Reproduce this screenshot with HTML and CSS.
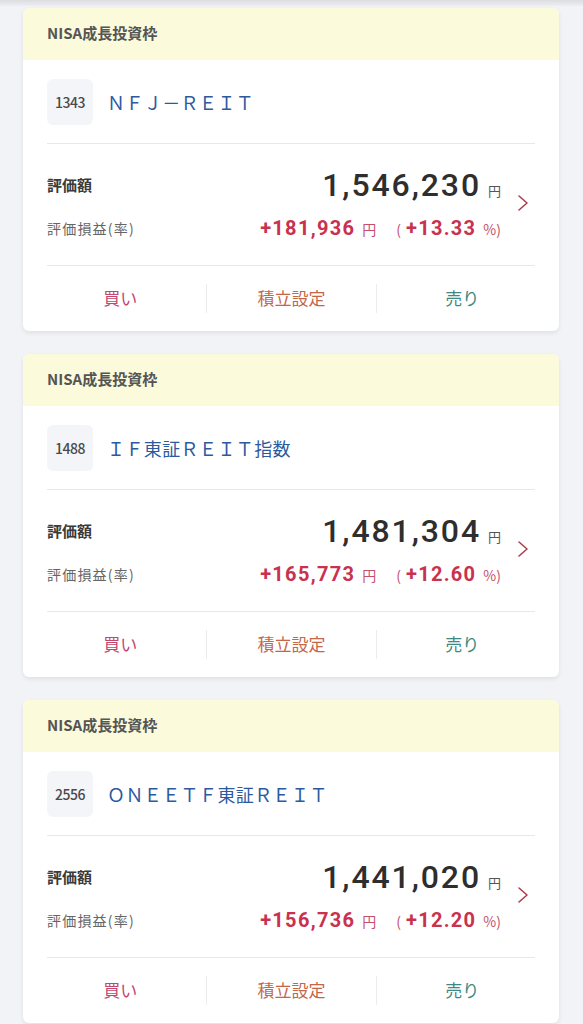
FILE: index.html
```html
<!DOCTYPE html>
<html lang="ja">
<head>
<meta charset="utf-8">
<title>NISA</title>
<link rel="stylesheet" href="styles.css">
</head>
<body>
<div class="topbar"></div>
<main class="list">
  <section class="card">
    <div class="card-head">NISA成長投資枠</div>
    <div class="card-body">
      <div class="name-row">
        <span class="code">1343</span>
        <span class="name">ＮＦＪ－ＲＥＩＴ</span>
      </div>
      <div class="values">
        <div class="value-table">
          <div class="row row-main">
            <span class="label-strong">評価額</span>
            <span class="amount"><span class="big">1,546,230</span><span class="yen">円</span></span>
          </div>
          <div class="row row-gain">
            <span class="label">評価損益(率)</span>
            <span class="gain"><span class="gain-num">+181,936</span><span class="gain-unit">円</span><span class="rate"><span class="paren">(</span><span class="gain-num">+13.33</span><span class="gain-unit">%)</span></span></span>
          </div>
        </div>
        <div class="chev"><svg width="13" height="18" viewBox="0 0 13 18"><path d="M2 2 L10 9 L2 16" fill="none" stroke="#a8404f" stroke-width="1.6" stroke-linecap="round" stroke-linejoin="round"/></svg></div>
      </div>
    </div>
    <div class="actions">
      <span class="act buy">買い</span>
      <span class="act plan">積立設定</span>
      <span class="act sell">売り</span>
    </div>
  </section>

  <section class="card">
    <div class="card-head">NISA成長投資枠</div>
    <div class="card-body">
      <div class="name-row">
        <span class="code">1488</span>
        <span class="name">ＩＦ東証ＲＥＩＴ指数</span>
      </div>
      <div class="values">
        <div class="value-table">
          <div class="row row-main">
            <span class="label-strong">評価額</span>
            <span class="amount"><span class="big">1,481,304</span><span class="yen">円</span></span>
          </div>
          <div class="row row-gain">
            <span class="label">評価損益(率)</span>
            <span class="gain"><span class="gain-num">+165,773</span><span class="gain-unit">円</span><span class="rate"><span class="paren">(</span><span class="gain-num">+12.60</span><span class="gain-unit">%)</span></span></span>
          </div>
        </div>
        <div class="chev"><svg width="13" height="18" viewBox="0 0 13 18"><path d="M2 2 L10 9 L2 16" fill="none" stroke="#a8404f" stroke-width="1.6" stroke-linecap="round" stroke-linejoin="round"/></svg></div>
      </div>
    </div>
    <div class="actions">
      <span class="act buy">買い</span>
      <span class="act plan">積立設定</span>
      <span class="act sell">売り</span>
    </div>
  </section>

  <section class="card">
    <div class="card-head">NISA成長投資枠</div>
    <div class="card-body">
      <div class="name-row">
        <span class="code">2556</span>
        <span class="name">ＯＮＥＥＴＦ東証ＲＥＩＴ</span>
      </div>
      <div class="values">
        <div class="value-table">
          <div class="row row-main">
            <span class="label-strong">評価額</span>
            <span class="amount"><span class="big">1,441,020</span><span class="yen">円</span></span>
          </div>
          <div class="row row-gain">
            <span class="label">評価損益(率)</span>
            <span class="gain"><span class="gain-num">+156,736</span><span class="gain-unit">円</span><span class="rate"><span class="paren">(</span><span class="gain-num">+12.20</span><span class="gain-unit">%)</span></span></span>
          </div>
        </div>
        <div class="chev"><svg width="13" height="18" viewBox="0 0 13 18"><path d="M2 2 L10 9 L2 16" fill="none" stroke="#a8404f" stroke-width="1.6" stroke-linecap="round" stroke-linejoin="round"/></svg></div>
      </div>
    </div>
    <div class="actions">
      <span class="act buy">買い</span>
      <span class="act plan">積立設定</span>
      <span class="act sell">売り</span>
    </div>
  </section>
</main>
</body>
</html>
```

FILE: styles.css
```css
* { box-sizing: border-box; }
html, body {
  margin: 0;
  padding: 0;
  background: #f2f3f7;
  font-family: "Noto Sans CJK JP", "Noto Sans", sans-serif;
  color: #333;
}
.topbar {
  height: 6px;
  background: linear-gradient(#dcdde0, #eceef1);
}
.list {
  padding: 2px 24px 0 23px;
}
.card {
  background: #fff;
  border-radius: 6px;
  box-shadow: 0 2px 4px rgba(0, 0, 0, 0.08);
  margin-bottom: 23px;
  overflow: hidden;
}
.card-head {
  height: 52px;
  background: #fbfadb;
  padding: 0 24px 3px;
  display: flex;
  align-items: center;
  font-size: 15px;
  font-weight: 700;
  color: #555;
}
.card-body {
  padding: 0 24px;
}
.name-row {
  display: flex;
  align-items: center;
  gap: 14px;
  padding: 19px 0 18px;
  border-bottom: 1px solid #e8e8ea;
}
.code {
  width: 46px;
  height: 46px;
  border-radius: 6px;
  background: #f4f5f9;
  display: flex;
  align-items: center;
  justify-content: center;
  font-size: 14px;
  font-weight: 500;
  color: #4a4a4a;
  letter-spacing: -0.5px;
}
.name {
  font-size: 18px;
  letter-spacing: 0.4px;
  color: #2d5a9f;
}
.values {
  display: flex;
  align-items: center;
  height: 122px;
  border-bottom: 1px solid #e8e8ea;
}
.value-table {
  flex: 1;
  padding-bottom: 4px;
}
.row {
  display: flex;
  justify-content: space-between;
  align-items: center;
}
.row-main { height: 38px; }
.row-gain { height: 24px; margin-top: 12px; }
.label-strong {
  font-size: 15px;
  font-weight: 700;
  color: #3a3a3a;
}
.label {
  font-size: 14px;
  letter-spacing: 1.2px;
  color: #666;
}
.amount {
  display: flex;
  align-items: baseline;
  gap: 7px;
}
.big {
  font-family: Roboto, "Liberation Sans", sans-serif;
  font-weight: 500;
  font-size: 32px;
  letter-spacing: 1.9px;
  color: #2e2e2e;
}
.yen {
  font-size: 13px;
  color: #555;
}
.gain {
  display: flex;
  align-items: baseline;
  color: #c8324f;
}
.gain-num {
  font-family: Roboto, "Liberation Sans", sans-serif;
  font-weight: 700;
  font-size: 20px;
  letter-spacing: 1.3px;
}
.gain-unit {
  font-size: 14px;
  color: #c4506a;
  margin-left: 7px;
}
.rate {
  display: flex;
  align-items: baseline;
  margin-left: 20px;
}
.paren {
  font-size: 14px;
  color: #c4506a;
  margin-right: 5px;
}
.chev {
  width: 34px;
  display: flex;
  justify-content: flex-end;
  padding-right: 5px;
  padding-bottom: 3px;
}
.chev svg { display: block; }
.actions {
  display: grid;
  grid-template-columns: 1fr 1fr 1fr;
  padding: 18px 12px 18px;
}
.act {
  height: 29px;
  display: flex;
  align-items: center;
  justify-content: center;
  font-size: 17px;
  padding-bottom: 3px;
}
.act + .act { border-left: 1px solid #ececee; }
.buy { color: #c2476d; }
.plan { color: #c3674a; }
.sell { color: #3e8a83; }
```
